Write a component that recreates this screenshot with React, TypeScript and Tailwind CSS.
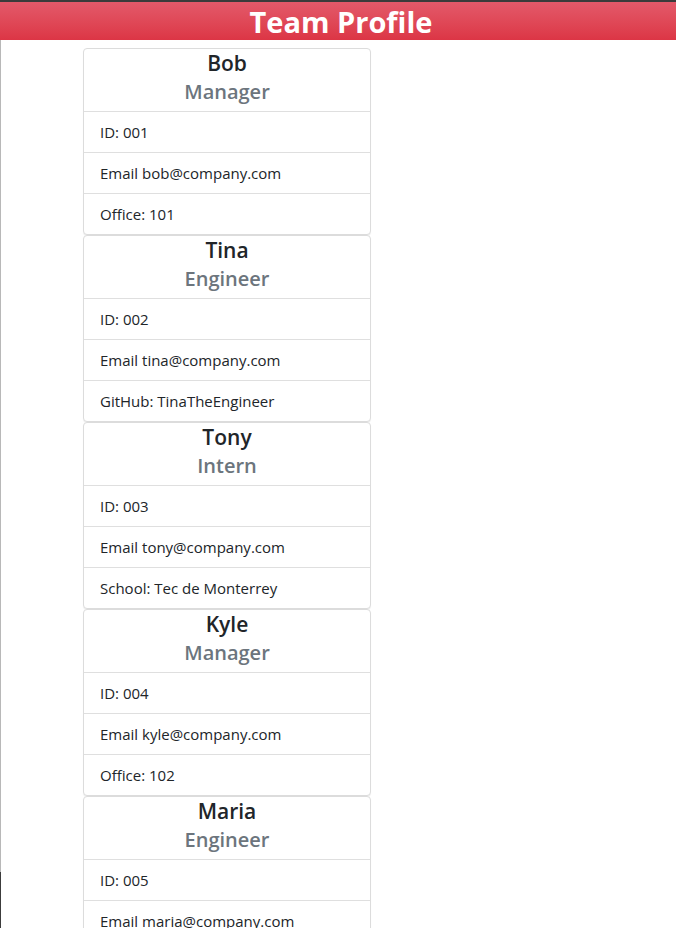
/**
 * Team Profile page
 */

type Member = {
  name: string
  role: string
  id: string
  email: string
  extra: string
}

const team: Member[] = [
  { name: 'Bob', role: 'Manager', id: '001', email: 'bob@company.com', extra: 'Office: 101' },
  { name: 'Tina', role: 'Engineer', id: '002', email: 'tina@company.com', extra: 'GitHub: TinaTheEngineer' },
  { name: 'Tony', role: 'Intern', id: '003', email: 'tony@company.com', extra: 'School: Tec de Monterrey' },
  { name: 'Kyle', role: 'Manager', id: '004', email: 'kyle@company.com', extra: 'Office: 102' },
  { name: 'Maria', role: 'Engineer', id: '005', email: 'maria@company.com', extra: 'GitHub: MariaCodes' },
]

function MemberCard({ member }: { member: Member }) {
  return (
    <div className="bg-white border border-[#dcdcdc] rounded-[4px] overflow-hidden shadow-[0_1px_1px_rgba(0,0,0,0.06)]">
      {/* Header */}
      <div className="h-[62px] flex flex-col items-center">
        <h5 className="text-[21px] leading-[28px] font-semibold text-[#212529]">{member.name}</h5>
        <h6 className="text-[20px] leading-[28px] font-semibold text-[#6c757d] mt-[1px]">{member.role}</h6>
      </div>
      {/* Details */}
      <ul>
        <li className="h-[41px] border-t border-[#dfdfdf] px-[16px] flex items-center text-[15px] text-[#212529]">
          ID: {member.id}
        </li>
        <li className="h-[41px] border-t border-[#dfdfdf] px-[16px] flex items-center text-[15px] text-[#212529]">
          Email {member.email}
        </li>
        <li className="h-[41px] border-t border-[#dfdfdf] px-[16px] flex items-center text-[15px] text-[#212529]">
          {member.extra}
        </li>
      </ul>
    </div>
  )
}

export default function App() {
  return (
    <div className="min-h-[928px] bg-white font-['Open_Sans',sans-serif]">
      {/* Header */}
      <div className="h-[2px] bg-[#3b3b3b]" />
      <header className="h-[38px] bg-linear-to-b from-[#e3596a] to-[#dc3545] flex items-center justify-center">
        <h1 className="text-[29px] leading-none font-bold text-white pl-[6px] mt-[1px]">Team Profile</h1>
      </header>

      <div className="flex">
        {/* window edge */}
        <div className="w-[1px] shrink-0 flex flex-col">
          <div className="h-[832px] bg-[#b8b8b8]" />
          <div className="flex-1 bg-[#3c3c3c]" />
        </div>
        {/* Cards */}
        <div className="ml-[82px] mt-[8px] w-[288px] flex flex-col">
          {team.map((m) => (
            <MemberCard key={m.id} member={m} />
          ))}
        </div>
      </div>
    </div>
  )
}
